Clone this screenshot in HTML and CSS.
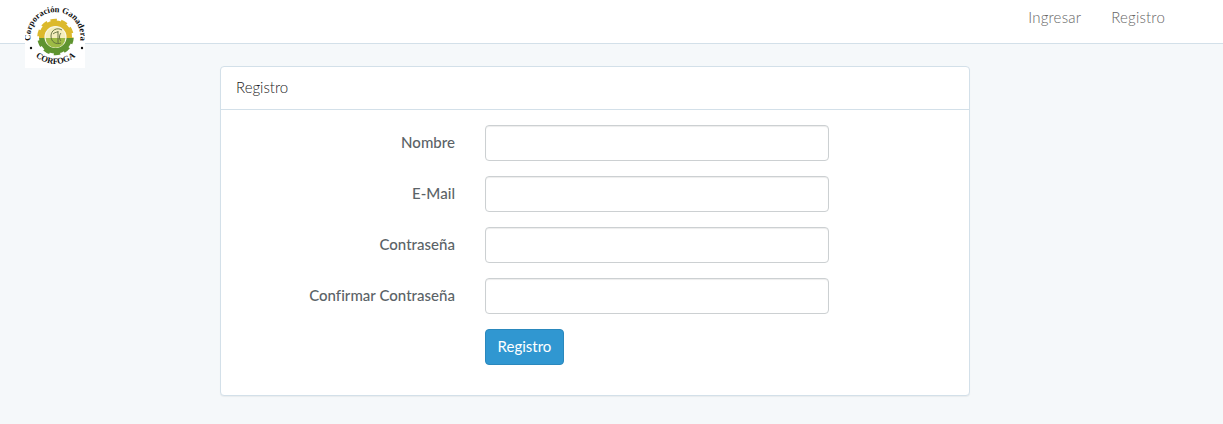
FILE: index.html
```html
<!DOCTYPE html>
<html lang="es">
<head>
<meta charset="utf-8">
<title>Registro</title>
<link rel="stylesheet" href="styles.css">
</head>
<body>
<nav class="navbar">
  <a class="brand" href="#" aria-label="Corporación Ganadera CORFOGA">
    <svg class="logo" viewBox="0 0 60 68" width="60" height="68">
      <rect width="60" height="68" fill="#fff"/>
      <defs>
        <path id="arcTop" d="M7.84 47.6 A25 25 0 1 1 53.16 47.6"/>
        <path id="arcBot" d="M11 57 Q30.5 71 50 57"/>
        <clipPath id="topHalf"><rect x="0" y="0" width="60" height="38"/></clipPath>
        <clipPath id="botHalf"><rect x="0" y="38" width="60" height="30"/></clipPath>
      </defs>
      <g clip-path="url(#topHalf)">
        <circle cx="30.5" cy="37" r="13.5" fill="none" stroke="#dcb92c" stroke-width="6"/>
        <circle cx="30.5" cy="37" r="16" fill="none" stroke="#dcb92c" stroke-width="4.5" stroke-dasharray="6 4.05" transform="rotate(-107 30.5 37)"/>
      </g>
      <g clip-path="url(#botHalf)">
        <circle cx="30.5" cy="37" r="13.5" fill="none" stroke="#5f9430" stroke-width="6"/>
        <circle cx="30.5" cy="37" r="16" fill="none" stroke="#5f9430" stroke-width="4.5" stroke-dasharray="6 4.05" transform="rotate(-107 30.5 37)"/>
      </g>
      <circle cx="30.5" cy="37" r="10.5" fill="#f4eebd" stroke="#f7f5e4" stroke-width="1.2"/>
      <path d="M20.7 38h19.6a9.8 9.8 0 0 1-19.6 0z" fill="#9dbb45"/>
      <path d="M37 30c-5-3-11 0-11 6s5 9 10 7M33 31v12M36 33c-2 2-2 6 0 8M28 34c1-1 3-2 5-2" fill="none" stroke="#5a6a3a" stroke-width=".9"/>
      <text class="logo-top"><textPath href="#arcTop" startOffset="50%" text-anchor="middle">Corporación Ganadera</textPath></text>
      <text class="logo-bot"><textPath href="#arcBot" startOffset="50%" text-anchor="middle">CORFOGA</textPath></text>
      <circle cx="6" cy="48" r="1.2" fill="#111"/>
      <circle cx="57" cy="48" r="1.2" fill="#111"/>
    </svg>
  </a>
  <ul class="nav-links">
    <li><a href="#">Ingresar</a></li>
    <li><a href="#">Registro</a></li>
  </ul>
</nav>
<main class="container">
  <section class="panel">
    <header class="panel-heading">Registro</header>
    <form class="panel-body">
      <div class="form-row"><label for="n">Nombre</label><input id="n" type="text"></div>
      <div class="form-row"><label for="e">E-Mail</label><input id="e" type="email"></div>
      <div class="form-row"><label for="c">Contraseña</label><input id="c" type="password"></div>
      <div class="form-row"><label for="f">Confirmar Contraseña</label><input id="f" type="password"></div>
      <div class="form-row"><span class="spacer"></span><button type="submit">Registro</button></div>
    </form>
  </section>
</main>
</body>
</html>
```
FILE: styles.css
```css
* { box-sizing: border-box; }
html, body { margin: 0; padding: 0; }
body {
  background: #f5f8fa;
  color: #636b6f;
  font-family: Lato, "Open Sans", sans-serif;
  font-size: 15px;
  line-height: 1.6;
  height: 424px;
  overflow: hidden;
}
.navbar {
  height: 44px;
  background: #fff;
  border-bottom: 1px solid #d3e0e9;
  display: flex;
  justify-content: space-between;
  padding: 0 58px 0 25px;
}
.brand { display: block; height: 68px; position: relative; z-index: 1; }
.logo { display: block; }
.logo-top { font-family: "Liberation Serif", serif; font-size: 8.6px; font-weight: 700; fill: #111; }
.logo-bot { font-family: "Liberation Serif", serif; font-size: 8.5px; font-weight: 700; fill: #111; }
.nav-links {
  list-style: none;
  margin: 0;
  padding: 0;
  display: flex;
  gap: 30px;
}
.nav-links a {
  display: block;
  color: #666;
  text-decoration: none;
  font-weight: 300;
  letter-spacing: .2px;
  line-height: 35px;
}
.container { width: 750px; margin: 22px 0 0 220px; }
.panel {
  background: #fff;
  border: 1px solid #d3e0e9;
  border-radius: 4px;
  box-shadow: 0 1px 1px rgba(0,0,0,.05);
  height: 330px;
}
.panel-heading {
  height: 43px;
  padding: 0 15px;
  line-height: 41px;
  color: #222;
  font-weight: 300;
  border-bottom: 1px solid #d3e0e9;
}
.panel-body {
  padding: 15px 0 0;
  display: flex;
  flex-direction: column;
  gap: 15px;
}
.form-row { display: flex; align-items: center; gap: 30px; height: 36px; }
.form-row label, .spacer { width: 234px; text-align: right; }
.form-row label { font-weight: 500; color: #5b6367; letter-spacing: .03px; padding-bottom: 2px; }
.form-row input {
  width: 344px;
  height: 36px;
  border: 1px solid #ccd0d2;
  border-radius: 4px;
  background: #fff;
  box-shadow: inset 0 1px 1px rgba(0,0,0,.075);
}
button {
  width: 79px;
  height: 36px;
  background: #3097d1;
  border: 1px solid #2a88bd;
  border-radius: 4px;
  color: #fff;
  font: inherit;
  padding: 0 0 2px;
}
```
